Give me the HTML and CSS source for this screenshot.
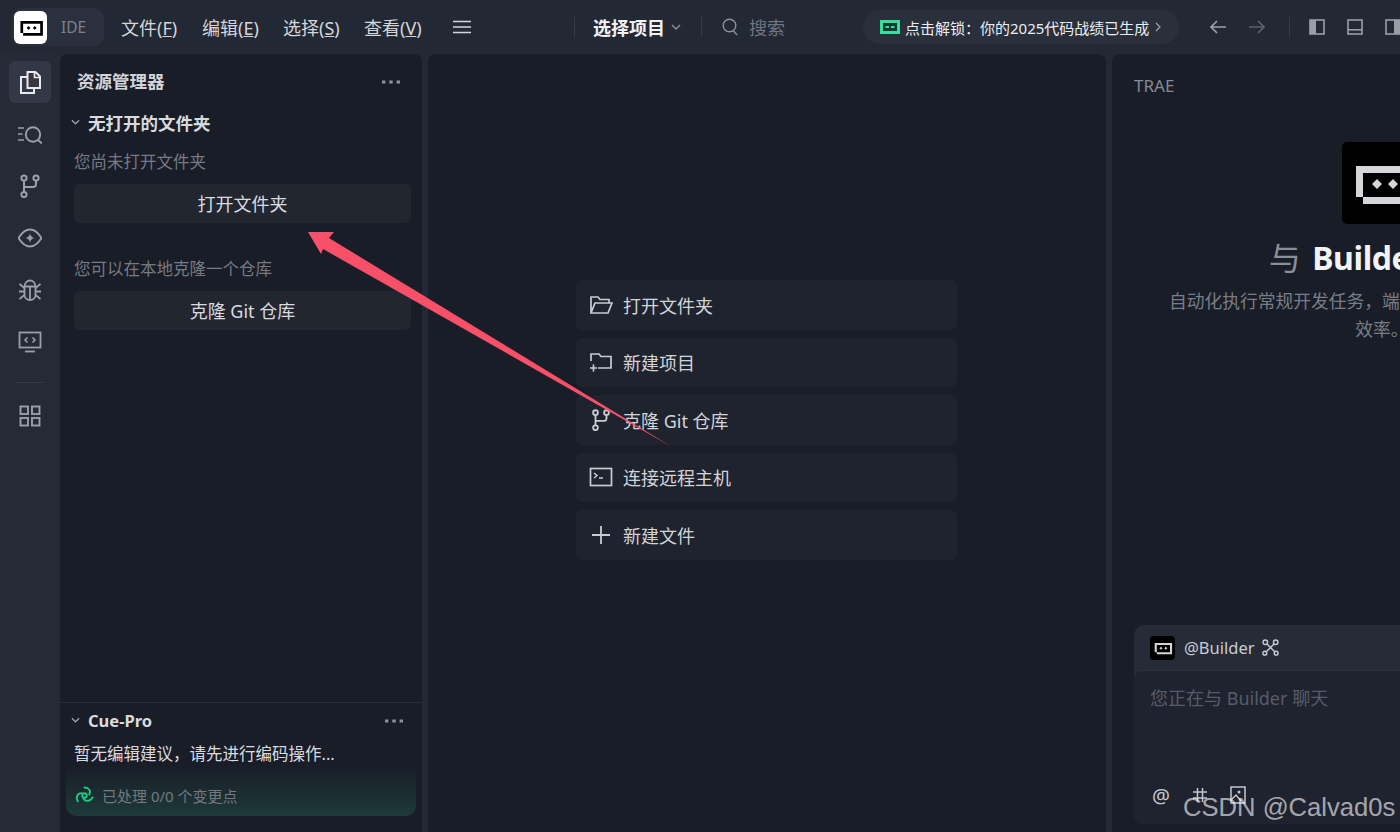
FILE: index.html
```html
<!DOCTYPE html>
<html lang="zh-CN">
<head>
<meta charset="utf-8">
<title>TRAE IDE</title>
<link rel="stylesheet" href="styles.css">
</head>
<body>
<svg class="defs" width="0" height="0" aria-hidden="true">
  <symbol id="logo" viewBox="0 0 80 80">
    <path fill="currentColor" fill-rule="evenodd" d="M14 23H72V61H21V54H14ZM21 30V54H65V30Z"/>
    <path fill="currentColor" d="M35 36l5 5-5 5-5-5ZM51 36l5 5-5 5-5-5Z"/>
  </symbol>
  <symbol id="branch" viewBox="0 0 20 24">
    <g fill="none" stroke="currentColor" stroke-width="2"><circle cx="4" cy="4" r="2.6"/><circle cx="16" cy="4" r="2.6"/><circle cx="4" cy="20.500" r="2.6"/><path d="M4 6.6V17.900M16 6.6V10a3 3 0 0 1-3 3H4"/></g>
  </symbol>
  <symbol id="dots" viewBox="0 0 18 4">
    <g fill="currentColor"><rect x="0" y="0.5" width="3.4" height="3"/><rect x="7.3" y="0.5" width="3.4" height="3"/><rect x="14.6" y="0.5" width="3.4" height="3"/></g>
  </symbol>
  <symbol id="chev" viewBox="0 0 10 6">
    <path d="M1 1l4 4 4-4" fill="none" stroke="currentColor" stroke-width="1.4"/>
  </symbol>
</svg>

<header class="topbar">
  <div class="brand">
    <span class="brand-logo"><svg class="brand-svg"><use href="#logo"/></svg></span>
    <span class="brand-name">IDE</span>
  </div>
  <nav class="menu">
    <span>文件(<u>F</u>)</span>
    <span>编辑(<u>E</u>)</span>
    <span>选择(<u>S</u>)</span>
    <span>查看(<u>V</u>)</span>
  </nav>
  <svg class="hamburger" viewBox="0 0 18 14"><path d="M0 1.5H18M0 7H18M0 12.5H18" stroke="currentColor" stroke-width="1.6"/></svg>
  <span class="vsep vsep-a"></span>
  <strong class="project">选择项目</strong>
  <svg class="project-chev"><use href="#chev"/></svg>
  <span class="vsep vsep-b"></span>
  <svg class="search-icon" viewBox="0 0 16 18"><circle cx="7.5" cy="7.5" r="6.3" fill="none" stroke="currentColor" stroke-width="1.4"/><path d="M11.5 13L15 17" stroke="currentColor" stroke-width="1.4"/></svg>
  <span class="search-text">搜索</span>
  <div class="pill">
    <svg class="pill-logo" viewBox="0 0 20 14"><path fill="#36e09a" fill-rule="evenodd" d="M0 0H20V14H0ZM3 3V11H17V3Z"/><path fill="#123a32" d="M3 3H17V11H3Z"/><path fill="#36e09a" d="M5.500 6H9V8H5.500ZM11 6H14.500V8H11Z"/></svg>
    <span class="pill-text">点击解锁：你的2025代码战绩已生成</span>
    <svg class="pill-chev" viewBox="0 0 6 10"><path d="M1 1l4 4-4 4" fill="none" stroke="currentColor" stroke-width="1.2"/></svg>
  </div>
  <svg class="nav-arrow nav-back" viewBox="0 0 18 16"><path d="M17 8H2M8 2L2 8l6 6" fill="none" stroke="currentColor" stroke-width="1.7"/></svg>
  <svg class="nav-arrow nav-forward" viewBox="0 0 18 16"><path d="M1 8H16M10 2l6 6-6 6" fill="none" stroke="currentColor" stroke-width="1.7"/></svg>
  <span class="vsep vsep-c"></span>
  <svg class="layout-icon" viewBox="0 0 16 16"><rect x="1" y="1" width="14" height="14" fill="none" stroke="currentColor" stroke-width="1.6"/><rect x="1" y="1" width="6" height="14" fill="currentColor"/></svg>
  <svg class="layout-icon" viewBox="0 0 16 16"><rect x="1" y="1" width="14" height="14" fill="none" stroke="currentColor" stroke-width="1.6"/><rect x="1" y="10" width="14" height="1.600" fill="currentColor"/></svg>
  <svg class="layout-icon" viewBox="0 0 16 16"><rect x="1" y="1" width="14" height="14" fill="none" stroke="currentColor" stroke-width="1.6"/><rect x="9" y="1" width="6" height="14" fill="currentColor"/></svg>
</header>

<div class="workspace">
  <aside class="activity">
    <div class="act-item act-active">
      <svg class="act-icon" viewBox="0 0 24 24"><path d="M9.500 2H17.500L22 6.500V18H9.500Z" fill="#3a3540" stroke="#e8eaee" stroke-width="2"/><path d="M16.500 2V7.500H22" fill="none" stroke="#e8eaee" stroke-width="1.600"/><path d="M9.500 7H3V23H16V18" fill="none" stroke="#e8eaee" stroke-width="2"/></svg>
    </div>
    <div class="act-item">
      <svg class="act-icon" viewBox="0 0 24 24"><path d="M0 6H6M0 12H4.500M0 18H6" stroke="currentColor" stroke-width="1.700"/><circle cx="15" cy="12.500" r="7.200" fill="none" stroke="currentColor" stroke-width="1.900"/><path d="M20 18L24 21.500" stroke="currentColor" stroke-width="1.900"/></svg>
    </div>
    <div class="act-item"><svg class="act-icon act-branch"><use href="#branch"/></svg></div>
    <div class="act-item">
      <svg class="act-icon" viewBox="0 0 24 24"><path d="M.5 12C4 6.500 8 3.500 12 3.500S20 6.500 23.500 12C20 17.500 16 20.500 12 20.500S4 17.500 .5 12Z" fill="none" stroke="currentColor" stroke-width="1.900"/><path d="M12 7.500Q12.800 11.200 16.500 12 12.800 12.800 12 16.500 11.200 12.800 7.500 12 11.200 11.200 12 7.500Z" fill="currentColor"/></svg>
    </div>
    <div class="act-item">
      <svg class="act-icon" viewBox="0 0 24 24"><path d="M6.500 9C6.500 5 9 2.500 12 2.500S17.500 5 17.500 9V17C17.500 20 15 22 12 22S6.500 20 6.500 17Z" fill="none" stroke="currentColor" stroke-width="1.800"/><path d="M12 8V22M6 8.500H18M1.500 6L6.500 10M22.500 6L17.500 10M1 13.500H6.500M23 13.500H17.500M1.500 21L6.500 17M22.500 21L17.500 17" fill="none" stroke="currentColor" stroke-width="1.800"/></svg>
    </div>
    <div class="act-item">
      <svg class="act-icon" viewBox="0 0 24 24"><rect x="1.500" y="2.500" width="21" height="15" fill="none" stroke="currentColor" stroke-width="1.800"/><path d="M7 21.500H17" stroke="currentColor" stroke-width="1.800"/><path d="M9.500 7.500L7 10l2.500 2.500M14.500 7.500L17 10l-2.500 2.500" fill="none" stroke="currentColor" stroke-width="1.600"/></svg>
    </div>
    <div class="act-divider"></div>
    <div class="act-item">
      <svg class="act-icon" viewBox="0 0 24 24"><g fill="none" stroke="currentColor" stroke-width="1.900"><rect x="2.500" y="2.500" width="7.500" height="7.500"/><rect x="14" y="2.500" width="7.500" height="7.500"/><rect x="2.500" y="14" width="7.500" height="7.500"/><rect x="14" y="14" width="7.500" height="7.500"/></g></svg>
    </div>
  </aside>

  <section class="explorer">
    <div class="explorer-main">
      <div class="explorer-head">
        <strong class="explorer-title">资源管理器</strong>
        <svg class="dots"><use href="#dots"/></svg>
      </div>
      <div class="section-head">
        <svg class="section-chev"><use href="#chev"/></svg>
        <strong class="section-title">无打开的文件夹</strong>
      </div>
      <p class="hint hint-first">您尚未打开文件夹</p>
      <div class="side-btn">打开文件夹</div>
      <p class="hint hint-second">您可以在本地克隆一个仓库</p>
      <div class="side-btn">克隆 Git 仓库</div>
    </div>
    <div class="cue">
      <div class="cue-head">
        <svg class="section-chev"><use href="#chev"/></svg>
        <strong class="cue-title">Cue-Pro</strong>
        <svg class="dots"><use href="#dots"/></svg>
      </div>
      <p class="cue-msg">暂无编辑建议，请先进行编码操作...</p>
      <div class="cue-status">
        <svg class="cue-icon" viewBox="0 0 20 20"><g fill="none" stroke="#1fc97f" stroke-width="2" stroke-linecap="round"><path d="M10 1.500C14.500 1.500 17 5 15 9"/><path d="M18.500 12C16 16 11.500 17 9 13.500"/><path d="M3 16C.5 12 2.500 7.500 7 7.500"/><circle cx="10" cy="10" r="2.400"/></g></svg>
        <span>已处理 0/0 个变更点</span>
      </div>
    </div>
  </section>

  <main class="center">
    <div class="action"><svg class="action-icon" viewBox="0 0 24 20"><path d="M2 18V2H9L11 4.500H20V8M2 18H19L23 8H6L2 18Z" fill="none" stroke="currentColor" stroke-width="1.700"/></svg><span>打开文件夹</span></div>
    <div class="action"><svg class="action-icon" viewBox="0 0 24 20"><path d="M2 9V2H10L12 4.500H22V16H9" fill="none" stroke="currentColor" stroke-width="1.700"/><path d="M1 16H8M4.500 12.500V19.500" stroke="currentColor" stroke-width="1.700"/></svg><span>新建项目</span></div>
    <div class="action"><svg class="action-icon action-branch"><use href="#branch"/></svg><span>克隆 Git 仓库</span></div>
    <div class="action"><svg class="action-icon" viewBox="0 0 24 20"><rect x="1.500" y="1.500" width="21" height="17" fill="none" stroke="currentColor" stroke-width="1.700"/><path d="M5 6l3 2.500L5 11M10 11H14" fill="none" stroke="currentColor" stroke-width="1.500"/></svg><span>连接远程主机</span></div>
    <div class="action"><svg class="action-icon" viewBox="0 0 24 20"><path d="M3 10H21M12 1V19" stroke="currentColor" stroke-width="1.800"/></svg><span>新建文件</span></div>
  </main>

  <section class="assistant">
    <div class="assistant-label">TRAE</div>
    <div class="intro">
      <div class="intro-logo"><svg class="intro-svg"><use href="#logo"/></svg></div>
      <h1 class="intro-title"><span class="intro-with">与</span> Builder 聊天</h1>
      <p class="intro-text">自动化执行常规开发任务，端到端完成交付，提升开发<br>效率。</p>
    </div>
    <div class="chat">
      <div class="chat-head">
        <span class="chat-logo"><svg class="chat-logo-svg"><use href="#logo"/></svg></span>
        <span class="chat-name">@Builder</span>
        <svg class="chat-tools" viewBox="0 0 18 18"><g fill="none" stroke="currentColor" stroke-width="1.500"><path d="M5 5L14 14M13 5L4 14"/><circle cx="3.500" cy="3.500" r="2.400"/><circle cx="14.500" cy="3.500" r="2.400"/><circle cx="3" cy="15" r="2"/><circle cx="15" cy="15" r="2"/></g></svg>
      </div>
      <div class="chat-input">
        <div class="chat-placeholder">您正在与 Builder 聊天</div>
        <div class="chat-tools-row">
          <span class="chat-at">@</span>
          <svg class="chat-hash" viewBox="0 0 16 16"><path d="M1 5H15M1 11H15M5.500 1V15M10.500 1V15" stroke="currentColor" stroke-width="1.500"/></svg>
          <svg class="chat-image" viewBox="0 0 16 18"><rect x="1" y="1" width="14" height="16" fill="none" stroke="currentColor" stroke-width="1.500"/><circle cx="9" cy="6" r="1.500" fill="currentColor"/><path d="M1 14L6 9l5 6" fill="none" stroke="currentColor" stroke-width="1.500"/></svg>
        </div>
      </div>
    </div>
  </section>
</div>

<svg class="arrow" viewBox="0 0 1400 832"><polygon fill="#f9506a" points="308,232 334,232 329,238 672,447 323,249 321,254"/></svg>
<div class="watermark">CSDN @Calvad0s</div>
</body>
</html>
```
FILE: styles.css
```css
* { box-sizing: border-box; }
html, body { margin: 0; height: 100%; }
body {
  width: 1400px;
  height: 832px;
  overflow: hidden;
  position: relative;
  background: #232835;
  color: #d9dbe0;
  font-family: "Noto Sans", "Noto Sans CJK SC", sans-serif;
  display: flex;
  flex-direction: column;
}
p, h1 { margin: 0; }
.defs { position: absolute; }

.topbar {
  height: 54px;
  flex: none;
  display: flex;
  align-items: center;
  padding-left: 12px;
  white-space: nowrap;
}
.topbar > * { flex: none; }
.brand {
  width: 92px;
  height: 38px;
  padding: 2px;
  border-radius: 10px;
  background: #2a303d;
  display: flex;
  align-items: center;
}
.brand-logo {
  width: 33px;
  height: 33px;
  border-radius: 6px;
  background: #fff;
  color: #000;
  display: flex;
  align-items: center;
  justify-content: center;
}
.brand-svg { width: 31px; height: 31px; }
.brand-name { margin-left: 14px; font-size: 15.500px; color: #7c828e; }
.menu {
  margin-left: 17px;
  margin-top: 2px;
  display: flex;
  gap: 21px;
  font-size: 18px;
  line-height: 24px;
  color: #d4d6da;
}
.menu span { width: 60px; }
.hamburger { width: 18px; height: 14px; margin-left: 29px; color: #d4d6da; }
.vsep { width: 1px; height: 20px; background: #343a47; }
.vsep-a { margin-left: 103px; }
.project { margin-left: 18px; font-size: 18px; color: #f0f1f3; }
.project-chev { width: 10px; height: 6px; margin-left: 6px; color: #8c919b; }
.vsep-b { margin-left: 20px; }
.search-icon { width: 16px; height: 18px; margin-left: 20px; color: #8c919b; }
.search-text { margin-left: 11px; font-size: 18px; color: #6f747e; }
.pill {
  margin-left: 78px;
  width: 316px;
  height: 34px;
  border-radius: 17px;
  background: #2a2f3c;
  display: flex;
  align-items: center;
  padding-left: 17px;
}
.pill-logo { width: 20px; height: 14px; flex: none; }
.pill-text { margin-left: 5px; font-size: 15px; color: #eceef0; }
.pill-chev { width: 6px; height: 10px; margin-left: 6px; color: #a0a4ad; }
.nav-arrow { width: 18px; height: 16px; }
.nav-back { margin-left: 30px; color: #9ca1aa; }
.nav-forward { margin-left: 21px; color: #5d626d; }
.vsep-c { margin-left: 23px; }
.layout-icon { width: 16px; height: 16px; margin-left: 19px; margin-right: 3px; color: #9a9ea7; }

.workspace { flex: 1; display: flex; min-height: 0; }

.activity {
  width: 60px;
  flex: none;
  padding: 7px 9px 0;
  display: flex;
  flex-direction: column;
  align-items: center;
  gap: 10px;
  background: #252a37;
}
.act-item {
  width: 42px;
  height: 42px;
  flex: none;
  border-radius: 6px;
  display: flex;
  align-items: center;
  justify-content: center;
  color: #9a9fa9;
}
.act-active { background: #323846; }
.act-icon { width: 24px; height: 24px; }
.act-branch { width: 20px; }
.act-divider { width: 28px; height: 1px; background: #363b48; margin: 9px 0 2px; }

.explorer {
  width: 362px;
  flex: none;
  background: #191d27;
  border-radius: 8px 8px 0 0;
  display: flex;
  flex-direction: column;
}
.explorer-main { flex: 1; padding: 0 11px 0 14px; border-bottom: 1px solid #2a2e39; }
.explorer-head {
  height: 52px;
  display: flex;
  align-items: center;
  justify-content: space-between;
  padding: 0 11px 0 3px;
}
.explorer-title { font-size: 17.500px; color: #d2d4d9; }
.explorer-head .dots { margin-top: 4px; }
.dots { width: 18px; height: 4px; color: #8e929b; flex: none; }
.section-head { height: 26px; display: flex; align-items: center; margin-top: 3px; }
.section-chev { width: 9px; height: 6px; color: #9ea2ab; flex: none; margin-left: -3px; }
.section-title { margin-left: 8px; font-size: 17.500px; color: #d8dade; }
.hint { font-size: 16.500px; line-height: 24px; color: #757a85; }
.hint-first { margin-top: 15px; }
.hint-second { margin-top: 34px; }
.side-btn {
  height: 39px;
  margin-top: 10px;
  border-radius: 6px;
  background: #22262f;
  font-size: 18px;
  line-height: 40px;
  text-align: center;
  color: #d9dbe0;
}
.cue { height: 129px; flex: none; display: flex; flex-direction: column; padding: 0 6px 16px; position: relative; }
.cue-head { display: flex; align-items: center; height: 36px; padding: 0 13px 0 8px; margin-top: -1px; }
.cue-head .dots { margin-top: 2px; }
.cue-title { margin-left: 8px; flex: 1; font-size: 16.500px; color: #d8dade; }
.cue-msg { padding-left: 8px; font-size: 16.500px; line-height: 24px; margin-top: 4px; color: #d9dbe0; }
.cue-status {
  flex: 1;
  margin-top: 0;
  border-radius: 0 0 10px 10px;
  background: linear-gradient(180deg, #191d27 0%, #1e3a3a 100%);
  display: flex;
  align-items: flex-end;
  padding: 0 0 8px 9px;
  font-size: 15px;
  line-height: 24px;
  color: #717a80;
}
.cue-icon { width: 19px; height: 19px; margin: 0 8px 3px 0; flex: none; }

.center {
  width: 678px;
  flex: none;
  margin-left: 6px;
  background: #191d27;
  border-radius: 8px 8px 0 0;
  padding: 226px 0 0 148px;
  display: flex;
  flex-direction: column;
  align-items: flex-start;
  gap: 8px;
}
.action {
  width: 381px;
  height: 49.500px;
  flex: none;
  padding-left: 13px;
  border-radius: 6px;
  background: #1f232e;
  display: flex;
  align-items: center;
  font-size: 18px;
  color: #d2d5da;
}
.action-icon { width: 24px; height: 20px; margin-right: 10px; flex: none; color: #c9ccd2; }
.action-branch { width: 20px; height: 22px; margin: 0 12px 0 2px; }

.assistant {
  width: 540px;
  flex: none;
  margin-left: 6px;
  background: #191d27;
  border-radius: 8px 8px 0 0;
  padding: 22px 22px 8px;
  display: flex;
  flex-direction: column;
}
.assistant-label { font-size: 17px; line-height: 20px; color: #868b95; }
.intro { display: flex; flex-direction: column; align-items: center; margin-top: 46px; }
.intro-logo {
  width: 80px;
  height: 82px;
  border-radius: 5px;
  background: #000;
  color: #d5d5da;
  flex: none;
}
.intro-svg { width: 80px; height: 82px; display: block; }
.intro-title {
  font-size: 32px;
  line-height: 46px;
  font-weight: 700;
  letter-spacing: -0.4px;
  color: #f2f3f5;
  margin-top: 11px;
  white-space: nowrap;
}
.intro-with { font-weight: 400; color: #8a8e97; margin-right: 4px; }
.intro-text { font-size: 17.750px; line-height: 28px; margin-top: 6px; color: #787d87; text-align: center; white-space: nowrap; }
.chat {
  margin-top: auto;
  height: 199px;
  flex: none;
  border-radius: 10px;
  background: #262b38;
  display: flex;
  flex-direction: column;
}
.chat-head { height: 45px; flex: none; display: flex; align-items: center; padding-left: 16px; }
.chat-logo {
  width: 25px;
  height: 24px;
  border-radius: 4px;
  background: #000;
  color: #d5d5da;
  display: flex;
}
.chat-logo-svg { width: 25px; height: 24px; }
.chat-name { margin-left: 9px; font-size: 16.500px; color: #c9ccd2; }
.chat-tools { width: 17px; height: 17px; margin-left: 7px; color: #c9ccd2; }
.chat-input {
  flex: 1;
  border-radius: 8px;
  background: #1f2330;
  border-top: 1px solid #2e3340;
  display: flex;
  flex-direction: column;
  justify-content: space-between;
  padding: 15px 16px 17px;
}
.chat-placeholder { font-size: 18px; line-height: 24px; color: #575c68; }
.chat-tools-row { display: flex; align-items: center; gap: 22px; color: #c4c7cd; margin-left: 2px; height: 24px; }
.chat-at { font-size: 20px; width: 18px; text-align: center; }
.chat-hash { width: 16px; height: 16px; }
.chat-image { width: 16px; height: 18px; }

.arrow { position: absolute; left: 0; top: 0; width: 1400px; height: 832px; pointer-events: none; }
.watermark {
  position: absolute;
  left: 1183px;
  top: 792px;
  font-family: "Liberation Sans", Arial, sans-serif;
  font-size: 25.600px;
  line-height: 30px;
  color: rgba(255, 255, 255, 0.62);
  white-space: nowrap;
}
```
